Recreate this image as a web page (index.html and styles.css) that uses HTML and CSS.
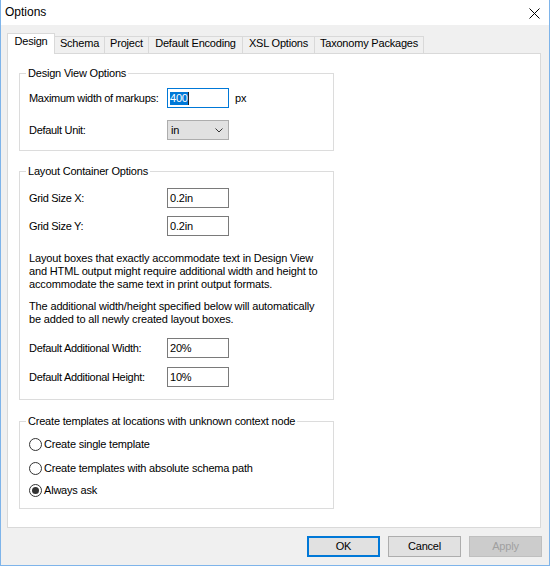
FILE: index.html
```html
<!DOCTYPE html>
<html>
<head>
<meta charset="utf-8">
<title>Options</title>
<link rel="stylesheet" href="styles.css">
</head>
<body>
<div class="window">
  <div class="titlebar">
    <span class="title">Options</span>
    <svg class="close" width="11" height="11" viewBox="0 0 11 11"><path d="M0.5 0.5L10.5 10.5M10.5 0.5L0.5 10.5" stroke="#000" stroke-width="1"/></svg>
  </div>
  <div class="content">
    <div class="tabs">
      <div class="tab active w-design">Design</div>
      <div class="tab w-schema">Schema</div>
      <div class="tab w-project">Project</div>
      <div class="tab w-enc">Default Encoding</div>
      <div class="tab w-xsl">XSL Options</div>
      <div class="tab w-tax">Taxonomy Packages</div>
    </div>
    <div class="panel">
      <fieldset class="group g1">
        <legend>Design View Options</legend>
        <div class="row">
          <span class="label">Maximum width of markups:</span>
          <div class="field focus"><span class="sel">400</span><span class="caret"></span></div>
          <span class="unit">px</span>
        </div>
        <div class="row gap12">
          <span class="label">Default Unit:</span>
          <div class="combo"><span>in</span><svg width="8" height="5" viewBox="0 0 8 5"><path d="M0.5 0.5L4 4L7.5 0.5" fill="none" stroke="#333" stroke-width="1"/></svg></div>
        </div>
      </fieldset>

      <fieldset class="group g2">
        <legend>Layout Container Options</legend>
        <div class="row">
          <span class="label">Grid Size X:</span>
          <div class="field">0.2in</div>
        </div>
        <div class="row gap8">
          <span class="label">Grid Size Y:</span>
          <div class="field">0.2in</div>
        </div>
        <p class="note first">Layout boxes that exactly accommodate text in Design View<br>and HTML output might require additional width and height to<br>accommodate the same text in print output formats.</p>
        <p class="note second">The additional width/height specified below will automatically<br>be added to all newly created layout boxes.</p>
        <div class="row gap12">
          <span class="label">Default Additional Width:</span>
          <div class="field">20%</div>
        </div>
        <div class="row gap9">
          <span class="label">Default Additional Height:</span>
          <div class="field">10%</div>
        </div>
      </fieldset>

      <fieldset class="group g3">
        <legend>Create templates at locations with unknown context node</legend>
        <div class="radio"><span class="dot"></span>Create single template</div>
        <div class="radio r2"><span class="dot"></span>Create templates with absolute schema path</div>
        <div class="radio r3"><span class="dot on"></span>Always ask</div>
      </fieldset>
    </div>
    <div class="buttons">
      <div class="btn default">OK</div>
      <div class="btn">Cancel</div>
      <div class="btn disabled">Apply</div>
    </div>
  </div>
</div>
</body>
</html>
```
FILE: styles.css
```css
* { box-sizing: border-box; }
html, body { margin: 0; padding: 0; }
body {
  font-family: "Liberation Sans", Arial, sans-serif;
  font-size: 11px;
  letter-spacing: -0.2px;
  color: #000;
  background: #fff;
}
.window {
  width: 550px;
  height: 566px;
  display: flex;
  flex-direction: column;
  background: #f0f0f0;
  border: 1px solid #7eb4ea;
  border-top: 0;
}
.titlebar {
  height: 25px;
  flex: none;
  background: #fff;
  display: flex;
  align-items: center;
  justify-content: space-between;
  padding: 0 9px 0 4px;
}
.title { font-size: 12px; line-height: 15px; letter-spacing: 0; }
.close { display: block; margin-top: 1px; }
.content {
  flex: 1;
  display: flex;
  flex-direction: column;
  padding: 8px 8px 8px 6px;
}
.tabs {
  display: flex;
  align-items: flex-end;
  height: 20px;
  flex: none;
}
.tab {
  height: 17px;
  border: 1px solid #d9d9d9;
  border-left: 0;
  border-bottom: 0;
  text-align: center;
  line-height: 13px;
  letter-spacing: -0.2px;
  background: #f0f0f0;
}
.tab.active {
  height: 21px;
  margin-bottom: -1px;
  padding-top: 1px;
  border-left: 1px solid #d9d9d9;
  background: #fff;
  position: relative;
  z-index: 1;
}
.w-design { width: 48px; }
.w-schema { width: 50px; }
.w-project { width: 44px; }
.w-enc { width: 94px; }
.w-xsl { width: 72px; }
.w-tax { width: 109px; }
.panel {
  flex: 1;
  background: #fff;
  border: 1px solid #d9d9d9;
  padding: 13px 0 0 11px;
  display: flex;
  flex-direction: column;
}
.group {
  margin: 0;
  width: 315px;
  min-width: 0;
  border: 1px solid #dcdcdc;
  padding: 0 9px;
}
.group legend {
  padding: 0 2px;
  margin-left: -3px;
  line-height: 13px;
}
.g1 { padding-top: 8px; padding-bottom: 10px; }
.g2 { margin-top: 14px; padding-top: 10px; padding-bottom: 12px; }
.g3 { margin-top: 15px; padding-top: 8px; padding-bottom: 10px; }
.row {
  display: flex;
  align-items: center;
  height: 20px;
}
.gap8 { margin-top: 8px; }
.gap9 { margin-top: 9px; }
.gap12 { margin-top: 12px; }
.label { width: 138px; flex: none; line-height: 13px; letter-spacing: -0.3px; }
.field {
  width: 62px;
  height: 20px;
  flex: none;
  border: 1px solid #7a7a7a;
  background: #fff;
  padding: 0 2px;
  display: flex;
  align-items: center;
  line-height: 13px;
}
.field.focus { border-color: #0078d7; }
.sel { background: #0078d7; color: #fff; line-height: 13px; }
.caret { width: 1px; height: 13px; background: #222; }
.unit { margin-left: 6px; }
.combo {
  width: 62px;
  height: 20px;
  flex: none;
  border: 1px solid #adadad;
  background: #e1e1e1;
  display: flex;
  align-items: center;
  justify-content: space-between;
  padding: 0 5px 0 3px;
  line-height: 13px;
}
.combo svg { display: block; }
.note { margin: 0; line-height: 13px; letter-spacing: -0.15px; }
.note.first { margin-top: 16px; }
.note.second { margin-top: 9px; }
.radio {
  display: flex;
  align-items: center;
  height: 16px;
  line-height: 13px;
}
.r2 { margin-top: 8px; }
.r3 { margin-top: 6px; }
.dot {
  width: 13px;
  height: 13px;
  flex: none;
  border: 1px solid #333;
  border-radius: 50%;
  background: #fff;
  margin-right: 2px;
  display: flex;
  align-items: center;
  justify-content: center;
}
.dot.on::after {
  content: "";
  width: 7px;
  height: 7px;
  border-radius: 50%;
  background: #333;
}
.buttons {
  display: flex;
  justify-content: flex-end;
  gap: 8px;
  margin-top: 8px;
  margin-right: -1px;
  height: 21px;
  flex: none;
}
.btn {
  width: 73px;
  height: 21px;
  border: 1px solid #adadad;
  background: #e1e1e1;
  display: flex;
  align-items: center;
  justify-content: center;
  line-height: 13px;
}
.btn.default { border: 2px solid #0078d7; }
.btn.disabled { background: #cccccc; border-color: #bfbfbf; color: #a0a0a0; }
```
